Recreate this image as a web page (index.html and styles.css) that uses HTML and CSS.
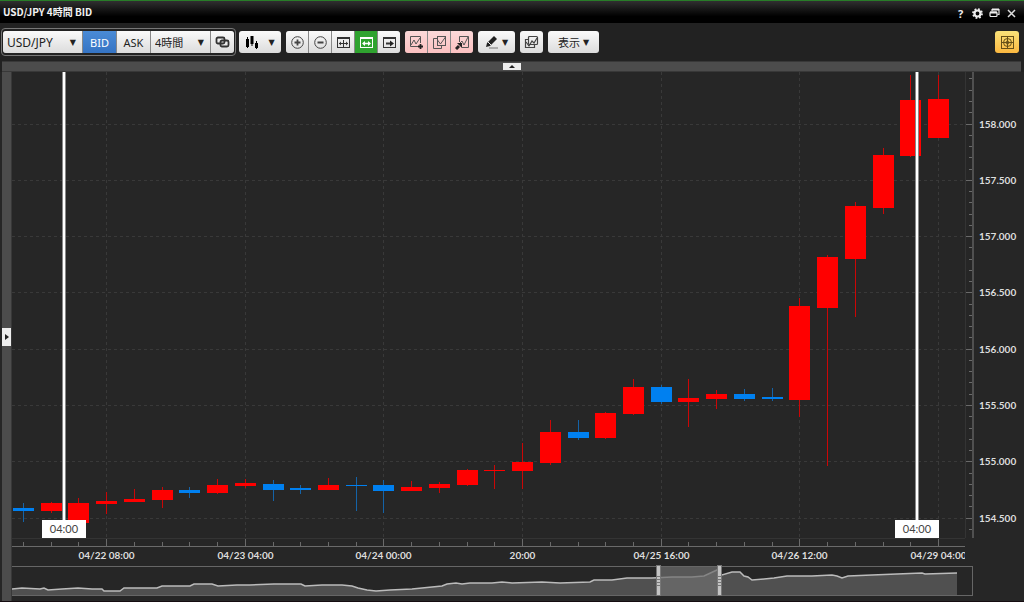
FILE: index.html
```html
<!DOCTYPE html>
<html lang="ja">
<head>
    <meta charset="UTF-8">
    <meta name="viewport" content="width=device-width, initial-scale=1">
    <title>USD/JPY 4時間 BID</title>
    <link rel="stylesheet" href="styles.css">
</head>
<body>

    <header class="titlebar">
        <h1>USD/JPY 4時間 BID</h1>
        <div class="window-buttons">
            <button class="win help" aria-label="ヘルプ">?</button>
            <button class="win" aria-label="設定">
                <svg width="11" height="11" viewBox="0 0 11 11"><circle cx="5.5" cy="5.5" r="3" fill="none" stroke="#eee" stroke-width="2.2"/><circle cx="5.5" cy="5.5" r="4.5" fill="none" stroke="#eee" stroke-width="1.8" stroke-dasharray="1.77 1.77"/></svg>
            </button>
            <button class="win" aria-label="元に戻す">
                <svg width="11" height="10" viewBox="0 0 11 10"><path d="M3 3V1.500h7v5H8.500" fill="none" stroke="#ddd" stroke-width="1.200"/><rect x="1" y="4" width="7" height="4.500" rx="1" fill="none" stroke="#eee" stroke-width="1.200"/><path d="M1 4.500h7M3 1.500h7" stroke="#eee" stroke-width="2"/></svg>
            </button>
            <button class="win" aria-label="閉じる">
                <svg width="9" height="9" viewBox="0 0 9 9"><path d="M1 1l7 7M8 1L1 8" stroke="#ddd" stroke-width="1.500"/></svg>
            </button>
        </div>
    </header>

    <div class="toolbar">
        <div class="pair-box">
            <div class="group">
                <div class="select pair">
                    <select aria-label="通貨ペア"><option>USD/JPY</option></select>
                </div>
                <button class="btn side active">BID</button>
                <button class="btn side">ASK</button>
                <div class="select period">
                    <select aria-label="足種"><option>4時間</option></select>
                </div>
                <button class="btn link" aria-label="連動">
                    <svg width="15" height="12" viewBox="0 0 15 12" fill="none" stroke="#333" stroke-width="1.800"><rect x="1.500" y="1.500" width="8" height="6" rx="1.500"/><rect x="5.500" y="4.500" width="8" height="6" rx="1.500"/></svg>
                </button>
            </div>
        </div>

        <div class="group">
            <button class="btn menu chart-type" aria-label="チャート種類">
                <svg width="14" height="14" viewBox="0 0 14 14"><path d="M2.500 2v11M7 1v10M11.500 6v8" stroke="#000"/><path d="M1 4h3v8H1zM5.500 1h3v8h-3zM10 8h3v5h-3z"/></svg>
                <span class="arrow">▼</span>
            </button>
        </div>

        <div class="group">
            <button class="btn" aria-label="拡大">
                <svg width="15" height="15" viewBox="0 0 15 15" fill="none" stroke="#444"><circle cx="7.500" cy="7.500" r="5.800"/><path d="M4.500 7.500h6M7.500 4.500v6" stroke-width="1.800"/></svg>
            </button>
            <button class="btn" aria-label="縮小">
                <svg width="15" height="15" viewBox="0 0 15 15" fill="none" stroke="#444"><circle cx="7.500" cy="7.500" r="5.800"/><path d="M4.500 7.500h6" stroke-width="1.800"/></svg>
            </button>
            <button class="btn" aria-label="全体表示">
                <svg width="15" height="13" viewBox="0 0 15 13" fill="none" stroke="#333"><rect x="1.500" y="1.500" width="12" height="10"/><path d="M1 2h13" stroke-width="2"/><path d="M3 7.500h9M7.500 4v7"/><path d="M5 5.500v4l-2-2zM10 5.500v4l2-2z" fill="#333" stroke="none"/></svg>
            </button>
            <button class="btn green" aria-label="横幅調整">
                <svg width="15" height="13" viewBox="0 0 15 13" fill="none" stroke="#fff"><rect x="1.500" y="1.500" width="12" height="10"/><path d="M1 2h13" stroke-width="2"/><path d="M4 7.500h7" stroke-width="1.500"/><path d="M6 5v5L3 7.500zM9 5v5l3-2.500z" fill="#fff" stroke="none"/></svg>
            </button>
            <button class="btn" aria-label="最新へ">
                <svg width="15" height="13" viewBox="0 0 15 13" fill="none" stroke="#333"><rect x="1.500" y="1.500" width="12" height="10"/><path d="M1 2h13" stroke-width="2"/><path d="M4 7.500h5" stroke-width="2"/><path d="M8 4.500v6l4-3z" fill="#222" stroke="none"/></svg>
            </button>
        </div>

        <div class="group pink">
            <button class="btn" aria-label="テクニカル追加">
                <svg width="15" height="15" viewBox="0 0 15 15" fill="none" stroke="#555"><path d="M9 11.500H1.500v-10h10V8"/><path d="M2 10l3-5 2 4 4-6"/><path d="M9 11.500h5M11.500 9v5" stroke="#222" stroke-width="1.800"/></svg>
            </button>
            <button class="btn" aria-label="テクニカル複製">
                <svg width="15" height="15" viewBox="0 0 15 15" fill="none" stroke="#555"><path d="M5 3.500H1.500v10h8V11"/><rect x="5.500" y="1.500" width="8" height="9"/><path d="M5.500 5l3 4 5-7"/></svg>
            </button>
            <button class="btn" aria-label="テクニカル移動">
                <svg width="15" height="15" viewBox="0 0 15 15" fill="none" stroke="#555"><path d="M4.500 7V1.500h9v11H7"/><path d="M5 8l2-2 2 4 4-8"/><path d="M1 14l3-3" stroke="#222" stroke-width="3"/><path d="M2 8h5v5z" fill="#222" stroke="none"/></svg>
            </button>
        </div>

        <div class="group">
            <button class="btn menu pen" aria-label="描画">
                <svg width="14" height="14" viewBox="0 0 14 14"><path d="M1 12l1-4 7-7 3 3-7 7z" fill="#222"/><path d="M3 7l3 3" stroke="#eee"/><path d="M4 13h9" stroke="#777"/></svg>
                <span class="arrow">▼</span>
            </button>
        </div>

        <div class="group">
            <button class="btn link" aria-label="チャート複製">
                <svg width="15" height="14" viewBox="0 0 15 14" fill="none" stroke="#444" stroke-width="1.200"><path d="M4 4.500H1.500v8h9V10"/><rect x="4.500" y="1.500" width="9" height="8" rx="1"/><path d="M2 7l3 4 3-5 2 2 3-5"/></svg>
            </button>
        </div>

        <div class="group">
            <button class="btn menu display">表示 <span class="arrow">▼</span></button>
        </div>

        <button class="btn target" aria-label="クロスライン">
            <svg width="15" height="15" viewBox="0 0 15 15" fill="none" stroke="#665018"><rect x="1.500" y="1.500" width="12" height="12"/><circle cx="7.500" cy="7.500" r="4"/><circle cx="7.500" cy="7.500" r="1.500"/><path d="M1 7.500h13M7.500 1v13"/></svg>
        </button>
    </div>

    <div class="top-splitter">
        <button class="top-handle" aria-label="上パネル">
            <svg width="6" height="3" viewBox="0 0 6 3"><path d="M0 3l3-3 3 3z" fill="#222"/></svg>
        </button>
    </div>

    <main class="workspace">
        <div class="left-splitter">
            <button class="left-handle" aria-label="左パネル">
                <svg width="4" height="6" viewBox="0 0 4 6"><path d="M0 0l4 3-4 3z" fill="#222"/></svg>
            </button>
        </div>
        <div class="chart-area">
            <svg id="chart" role="img" aria-label="USD/JPY 4時間足"></svg>
        </div>
    </main>

    <script src="chart.js"></script>
</body>
</html>
```
FILE: styles.css
```css
* {
    box-sizing: border-box;
}
html, body {
    height: 100%;
}
body {
    margin: 0;
    display: flex;
    flex-direction: column;
    overflow: hidden;
    background: #222;
    font-family: "Noto Sans", "Noto Sans CJK JP", sans-serif;
    font-size: 11px;
}
button, select {
    font: inherit;
    margin: 0;
    padding: 0;
    border: 0;
}
svg {
    display: block;
}

/* title bar */
.titlebar {
    display: flex;
    align-items: center;
    justify-content: space-between;
    height: 23px;
    padding: 0 7px 0 3px;
    border-top: 1px solid #287d28;
    background: linear-gradient(#303030, #000 70%);
    color: #f2f2f2;
}
.titlebar h1 {
    margin: 0;
    font-family: "Noto Sans CJK JP", sans-serif;
    font-size: 10px;
    line-height: 20px;
    font-weight: bold;
}
.window-buttons {
    display: flex;
    align-items: center;
    gap: 6px;
    padding-top: 2px;
}
.win {
    display: flex;
    align-items: center;
    justify-content: center;
    width: 11px;
    height: 16px;
    background: none;
    color: #eee;
}
.help {
    font-weight: bold;
}

/* toolbar */
.toolbar {
    display: flex;
    align-items: center;
    gap: 5px;
    height: 38px;
    padding: 0 5px 0 1px;
}
.pair-box {
    padding: 2px 1px;
    margin-right: -2px;
    border: 1px solid #777;
    border-radius: 4px;
}
.group {
    display: flex;
    gap: 1px;
    border-radius: 3px;
    overflow: hidden;
    background: #888;
}
.btn {
    display: flex;
    align-items: center;
    justify-content: center;
    width: 22px;
    height: 22px;
    background: linear-gradient(#fafafa, #dcdcdc);
    color: #222;
}
.link {
    width: 23px;
}
.side {
    width: 33px;
}
.active {
    background: linear-gradient(#4a8bd6, #3574c4);
    color: #fff;
}
.green {
    background: #2fa32f;
}
.pink .btn {
    background: linear-gradient(#fbd9d9, #fbc0c0);
}
.menu {
    gap: 6px;
}
.chart-type {
    width: 42px;
    gap: 9px;
}
.pen {
    width: 37px;
    gap: 3px;
}
.display {
    width: 51px;
    gap: 3px;
}
.arrow {
    font-family: "DejaVu Sans", sans-serif;
    font-size: 8px;
}
.select {
    position: relative;
}
.select select {
    appearance: none;
    width: 100%;
    height: 22px;
    padding-left: 4px;
    border-radius: 0;
    background: linear-gradient(#fafafa, #dcdcdc);
    color: #222;
}
.select::after {
    content: "▼";
    position: absolute;
    right: 6px;
    top: 7px;
    font-family: "DejaVu Sans", sans-serif;
    font-size: 8px;
    line-height: 10px;
    color: #222;
    pointer-events: none;
}
.pair {
    width: 79px;
    font-size: 12px;
}
.period {
    width: 59px;
}
.target {
    width: 24px;
    margin-left: auto;
    border-radius: 3px;
    background: linear-gradient(#f9e27a, #fbb840);
}

/* panels */
.top-splitter {
    display: flex;
    justify-content: center;
    align-items: center;
    height: 11px;
    margin: 0 3px 0 2px;
    border-top: 1px solid #383838;
    border-bottom: 1px solid #383838;
    background: #4c4c4c;
}
.top-handle {
    display: flex;
    align-items: center;
    justify-content: center;
    width: 18px;
    height: 7px;
    background: #eee;
}
.workspace {
    display: flex;
    flex: 1;
    min-height: 0;
    background: #262626;
    border-bottom: 1px solid #150c10;
}
.left-splitter {
    display: flex;
    align-items: center;
    width: 10px;
    margin-left: 2px;
    border-right: 1px solid #383838;
    background: #4c4c4c;
}
.left-handle {
    display: flex;
    align-items: center;
    justify-content: center;
    width: 9px;
    height: 18px;
    background: #eee;
}
.chart-area {
    flex: 1;
    min-width: 0;
}

/* chart */
#chart {
    width: 100%;
    height: 100%;
}
.grid {
    stroke: #393939;
    stroke-dasharray: 3 3;
}
.frame {
    stroke: #343434;
}
.axis {
    stroke: #6a6a6a;
}
.price-axis {
    stroke: #505050;
    stroke-width: 2;
}
.label {
    fill: #ddd;
    font-family: Lato, sans-serif;
    font-size: 10px;
    font-weight: bold;
}
.up {
    fill: #f00;
}
.down {
    fill: #0080f0;
}
.wick-up {
    stroke: #cc0606;
}
.wick-down {
    stroke: #1463a8;
}
.cursor {
    fill: #fff;
    stroke: #888;
    stroke-width: 1;
}
.cursor-box {
    fill: #fff;
}
.cursor-text {
    fill: #444;
    font-family: Lato, sans-serif;
    font-size: 11px;
}
.nav-frame {
    fill: none;
    stroke: #666;
}
.nav-fill {
    fill: #505050;
}
.nav-line {
    fill: none;
    stroke: #bbb;
    stroke-width: 1.5px;
}
.nav-window {
    fill: #6e6e6e;
    fill-opacity: 0.7;
}
.nav-handle {
    fill: #c4c4c4;
    stroke: #777;
}
.nav-grip {
    stroke: #777;
}
```
FILE: chart.js
```js
// [direction, high, body top, body bottom, low] on a 466 unit high plot
const candles = [
    ["d", 431, 436, 439, 450], ["u", 430, 431, 439, 441], ["u", 426, 431, 451, 451],
    ["u", 420, 429, 432, 442], ["u", 417, 427, 430, 430], ["u", 415, 418, 428, 436],
    ["d", 415, 418, 421, 426], ["u", 407, 413, 421, 422], ["u", 407, 411, 414, 416],
    ["d", 408, 412, 418, 429], ["d", 413, 416, 418, 422], ["u", 406, 413, 418, 418],
    ["d", 405, 413, 414, 439], ["d", 408, 413, 419, 441], ["u", 409, 415, 419, 419],
    ["u", 410, 412, 416, 421], ["u", 397, 398, 413, 414], ["u", 393, 398, 399, 417],
    ["u", 371, 390, 399, 417], ["u", 348, 360, 391, 393], ["d", 348, 360, 366, 368],
    ["u", 340, 341, 366, 367], ["u", 307, 315, 342, 343], ["d", 313, 315, 330, 332],
    ["u", 307, 326, 330, 355], ["u", 318, 322, 327, 337], ["d", 317, 322, 327, 329],
    ["d", 316, 325, 327, 329], ["u", 226, 234, 328, 345], ["u", 183, 185, 236, 394],
    ["u", 130, 134, 187, 245], ["u", 76, 83, 136, 142], ["u", 3, 28, 84, 85],
    ["u", 3, 27, 66, 66]
];
const timeLabels = ["04/22 08:00", "04/23 04:00", "04/24 00:00", "20:00", "04/25 16:00", "04/26 12:00", "04/29 04:00"];
const overview = [
    [0, 589], [10, 588], [28, 589], [32, 588], [36, 590], [50, 589], [66, 588], [80, 589], [90, 589],
    [92, 591], [108, 591], [112, 588], [130, 588], [145, 588], [150, 586], [178, 586], [182, 584],
    [200, 584], [206, 586], [225, 585], [238, 585], [262, 584], [289, 584], [293, 586], [310, 585],
    [330, 585], [340, 586], [346, 588], [355, 590], [364, 591], [378, 590], [400, 589], [420, 587],
    [430, 586], [435, 584], [444, 583], [450, 584], [458, 583], [480, 583], [490, 582], [500, 583],
    [530, 582], [548, 583], [578, 582], [582, 580], [600, 580], [615, 578], [640, 578], [660, 577],
    [680, 577], [692, 576], [705, 570], [710, 575], [720, 572], [728, 572], [732, 576], [736, 577],
    [740, 580], [752, 579], [762, 578], [775, 576], [800, 576], [820, 575], [825, 576], [830, 578],
    [836, 576], [860, 575], [885, 574], [910, 573], [913, 574], [945, 573]
];

const svg = document.getElementById("chart");

function add(tag, attrs, text) {
    const el = document.createElementNS("http://www.w3.org/2000/svg", tag);
    for (const key in attrs) {
        el.setAttribute(key, attrs[key]);
    }
    if (text) el.textContent = text;
    svg.appendChild(el);
    return el;
}

function line(cls, x1, y1, x2, y2) {
    add("line", { class: cls, x1, y1, x2, y2 });
}

function drawChart() {
    svg.textContent = "";
    const width = svg.clientWidth;
    const height = svg.clientHeight;
    const plotW = width - 59;
    const plotH = height - 63;
    const axisX = plotW + 8;
    const axisY = plotH + 8;
    const step = (plotW - 38) / 33;
    const sy = plotH / 466;
    const candleX = i => Math.round(11 + step * i) + 0.5;
    const snap = v => Math.floor(v) + 0.5;

    const clip = add("clipPath", { id: "plot" });
    const clipRect = add("rect", { x: 0, y: 0, width: plotW, height: height });
    clip.appendChild(clipRect);

    // price grid and scale
    for (let i = 0; i < 8; i++) {
        const y = snap((52 + i * 56.3) * sy);
        line("grid", 0, y, plotW, y);
        line("axis", plotW, y, axisX, y);
        add("text", { class: "label", x: axisX + 6, y: y + 3 }, (158 - i * 0.5).toFixed(3));
    }
    for (let i = -4; i < 37; i++) {
        const y = snap((52 + i * 11.26) * sy);
        line("axis", axisX - 4, y, axisX, y);
    }

    // time grid and scale
    candles.forEach((c, i) => {
        const x = candleX(i);
        const major = i % 5 === 3;
        line("axis", x, major ? plotH : plotH + 4, x, axisY);
        if (major) {
            line("grid", x, 0, x, plotH);
            add("text", { class: "label", x: x, y: axisY + 13, "text-anchor": "middle", "clip-path": "url(#plot)" }, timeLabels[(i - 3) / 5]);
        }
    });
    line("frame", plotW + 0.5, 0, plotW + 0.5, plotH);
    line("frame", 0, plotH + 0.5, plotW, plotH + 0.5);
    line("axis", 0, axisY + 0.5, plotW, axisY + 0.5);
    line("price-axis", axisX, 0, axisX, plotH);

    // candles
    candles.forEach(([dir, high, top, bottom, low], i) => {
        const x = candleX(i);
        const name = dir === "u" ? "up" : "down";
        line("wick-" + name, x, high * sy, x, low * sy);
        add("rect", { class: name, x: x - 10.5, y: top * sy, width: 21, height: (bottom - top) * sy });
    });

    // range cursors
    [52, plotW - 48].forEach(x => {
        add("rect", { class: "cursor", x: x - 1.5, y: -1, width: 3, height: plotH });
        add("rect", { class: "cursor-box", x: x - 22, y: plotH - 18, width: 44, height: 18 });
        add("text", { class: "cursor-text", x: x, y: plotH - 5, "text-anchor": "middle" }, "04:00");
    });

    // overview strip
    const navTop = height - 35;
    const navBottom = navTop + 29;
    const nx = axisX / 961;
    const points = overview.map(([x, y]) => (x * nx) + "," + (y - 566 + navTop)).join(" ");
    const right = 945 * nx;
    add("polygon", { class: "nav-fill", points: "0," + navBottom + " " + points + " " + right + "," + navBottom });
    add("polyline", { class: "nav-line", points: points });
    add("rect", { class: "nav-window", x: 646 * nx, y: navTop, width: 61 * nx, height: 29 });
    add("rect", { class: "nav-frame", x: -0.5, y: navTop + 0.5, width: axisX, height: 29 });
    [646, 707].forEach(pos => {
        const x = Math.round(pos * nx);
        add("rect", { class: "nav-handle", x: x - 1.5, y: navTop - 0.5, width: 4, height: 30 });
        for (let i = 0; i < 4; i++) {
            line("nav-grip", x - 1, navTop + 10.5 + i * 3, x + 2, navTop + 10.5 + i * 3);
        }
    });
}

window.addEventListener("resize", drawChart);
drawChart();
```
